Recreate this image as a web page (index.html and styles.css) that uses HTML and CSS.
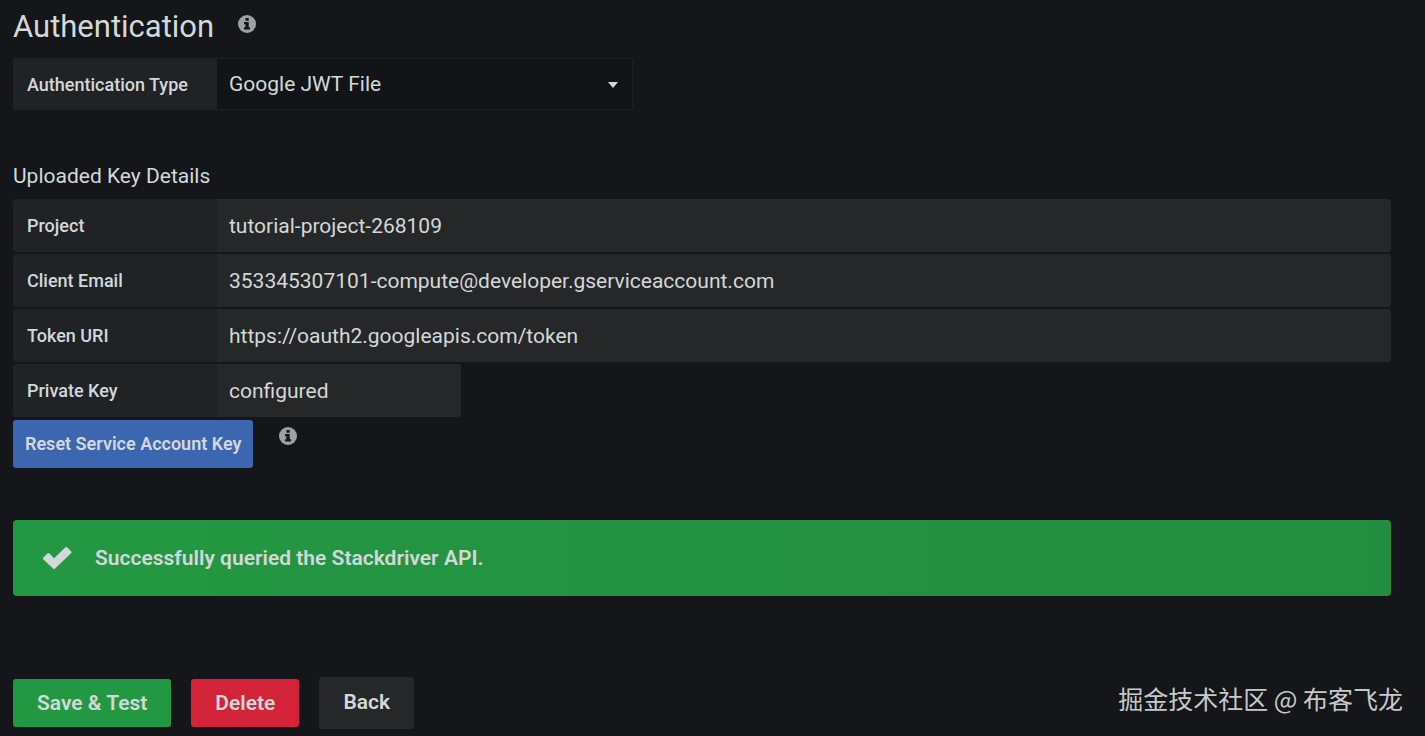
FILE: index.html
```html
<!DOCTYPE html>
<html lang="en">

<head>
  <meta charset="utf-8">
  <title>Stackdriver: Settings</title>
  <link rel="stylesheet" href="styles.css">
</head>

<body>
  <form class="page">
    <div class="heading">
      <h1>Authentication</h1>
      <svg class="info-icon" viewBox="0 0 18 18" aria-hidden="true">
        <circle cx="9" cy="9" r="9" />
        <path d="M7.5 3h3.2v2.7H7.5zM6 7h4.7v5.2H12v2.3H6v-2.3h1.4V9.2H6z" />
      </svg>
    </div>

    <div class="row auth-row">
      <label class="row-label" for="authType">Authentication Type</label>
      <div class="select-wrapper">
        <select id="authType">
          <option>Google JWT File</option>
          <option>GCE Default Service Account</option>
        </select>
      </div>
    </div>

    <h2>Uploaded Key Details</h2>

    <div class="key-details">
      <div class="row">
        <label class="row-label" for="project">Project</label>
        <input type="text" id="project" value="tutorial-project-268109" readonly>
      </div>
      <div class="row">
        <label class="row-label" for="clientEmail">Client Email</label>
        <input type="text" id="clientEmail" value="353345307101-compute@developer.gserviceaccount.com" readonly>
      </div>
      <div class="row">
        <label class="row-label" for="tokenUri">Token URI</label>
        <input type="text" id="tokenUri" value="https://oauth2.googleapis.com/token" readonly>
      </div>
      <div class="row row-short">
        <label class="row-label" for="privateKey">Private Key</label>
        <input type="text" id="privateKey" value="configured" readonly>
      </div>
    </div>

    <div class="reset">
      <button type="button" class="btn btn-small btn-blue">Reset Service Account Key</button>
      <svg class="info-icon" viewBox="0 0 18 18" aria-hidden="true">
        <circle cx="9" cy="9" r="9" />
        <path d="M7.5 3h3.2v2.7H7.5zM6 7h4.7v5.2H12v2.3H6v-2.3h1.4V9.2H6z" />
      </svg>
    </div>

    <div class="alert" role="status">
      <svg class="check-icon" viewBox="0 0 28 22" aria-hidden="true">
        <path d="M1.5 11.5l3.8-3.8 5.8 5.6L23.2 1.5l3.8 3.7L11.1 20.5z" />
      </svg>
      <span>Successfully queried the Stackdriver API.</span>
    </div>

    <div class="buttons">
      <button type="submit" class="btn btn-green">Save &amp; Test</button>
      <button type="button" class="btn btn-red">Delete</button>
      <a href="#" class="btn btn-dark">Back</a>
    </div>
  </form>

  <div class="watermark">掘金技术社区 @ 布客飞龙</div>
</body>

</html>
```

FILE: styles.css
```css
* {
  box-sizing: border-box;
}

body {
  margin: 0;
  background-color: #141619;
  color: #d3d8d8;
  font-family: Roboto, sans-serif;
  font-size: 21px;
}

.page {
  padding: 8px 34px 8px 13px;
}

/* Headings */
.heading {
  display: flex;
  gap: 24px;
  height: 50px;
}

h1 {
  margin: 0;
  font-size: 31px;
  font-weight: 400;
  line-height: 38px;
}

h2 {
  margin: 52px 0 9px;
  font-size: 21px;
  font-weight: 400;
  line-height: 28px;
}

.info-icon {
  width: 18px;
  height: 18px;
  margin-top: 7px;
}

.info-icon circle {
  fill: #9da1a2;
}

.info-icon path {
  fill: #141619;
}

/* Form rows */
.row {
  display: flex;
  height: 53px;
}

.auth-row {
  width: 620px;
  height: 52px;
}

.row-short {
  width: 448px;
}

.row-label {
  flex: 0 0 204px;
  padding: 0 14px;
  background-color: #202326;
  border-radius: 3px 0 0 3px;
  font-size: 18px;
  font-weight: 500;
  line-height: 53px;
}

.row input,
.row select {
  width: 100%;
  min-width: 0;
  height: 100%;
  padding: 0 12px;
  border: 0;
  border-radius: 0 3px 3px 0;
  background-color: #252729;
  color: inherit;
  font: inherit;
  outline: none;
}

.select-wrapper {
  position: relative;
  flex: 1;
}

.row select {
  appearance: none;
  border: 1px solid #1e2023;
  border-left: 0;
  background-color: #121517;
}

.select-wrapper::after {
  content: '';
  position: absolute;
  top: 24px;
  right: 15px;
  border: 5px solid transparent;
  border-top: 6px solid #d3d8d8;
  border-bottom: 0;
  pointer-events: none;
}

.key-details {
  display: flex;
  flex-direction: column;
  gap: 2px;
}

.reset {
  display: flex;
  gap: 26px;
  margin-top: 3px;
}

/* Alert */
.alert {
  display: flex;
  align-items: center;
  gap: 24px;
  height: 76px;
  margin-top: 52px;
  padding: 0 30px;
  border-radius: 4px;
  background: linear-gradient(90deg, #239843, #238d3f);
  font-weight: 600;
}

.check-icon {
  width: 28px;
  height: 22px;
  fill: #d3d8d8;
  stroke: #d3d8d8;
  stroke-width: 3;
  stroke-linejoin: round;
  overflow: visible;
}

/* Buttons */
.buttons {
  display: flex;
  align-items: center;
  gap: 20px;
  margin-top: 81px;
}

.btn {
  height: 48px;
  padding: 0 24px;
  border: 0;
  border-radius: 3px;
  color: #d3d8d8;
  font-family: inherit;
  font-size: 21px;
  font-weight: 600;
  line-height: 46px;
  text-decoration: none;
  cursor: pointer;
}

.btn-small {
  padding: 0 12px;
  font-size: 18px;
}

.btn-blue {
  background-color: #3c66af;
}

.btn-green {
  background-color: #239843;
}

.btn-red {
  background-color: #d22338;
}

.btn-dark {
  height: 52px;
  background-color: #252729;
  line-height: 50px;
}

.watermark {
  position: absolute;
  right: 22px;
  bottom: 20px;
  color: #c8c9ca;
  font-family: "Noto Sans CJK SC", sans-serif;
  font-size: 25px;
  line-height: 36px;
}
```
